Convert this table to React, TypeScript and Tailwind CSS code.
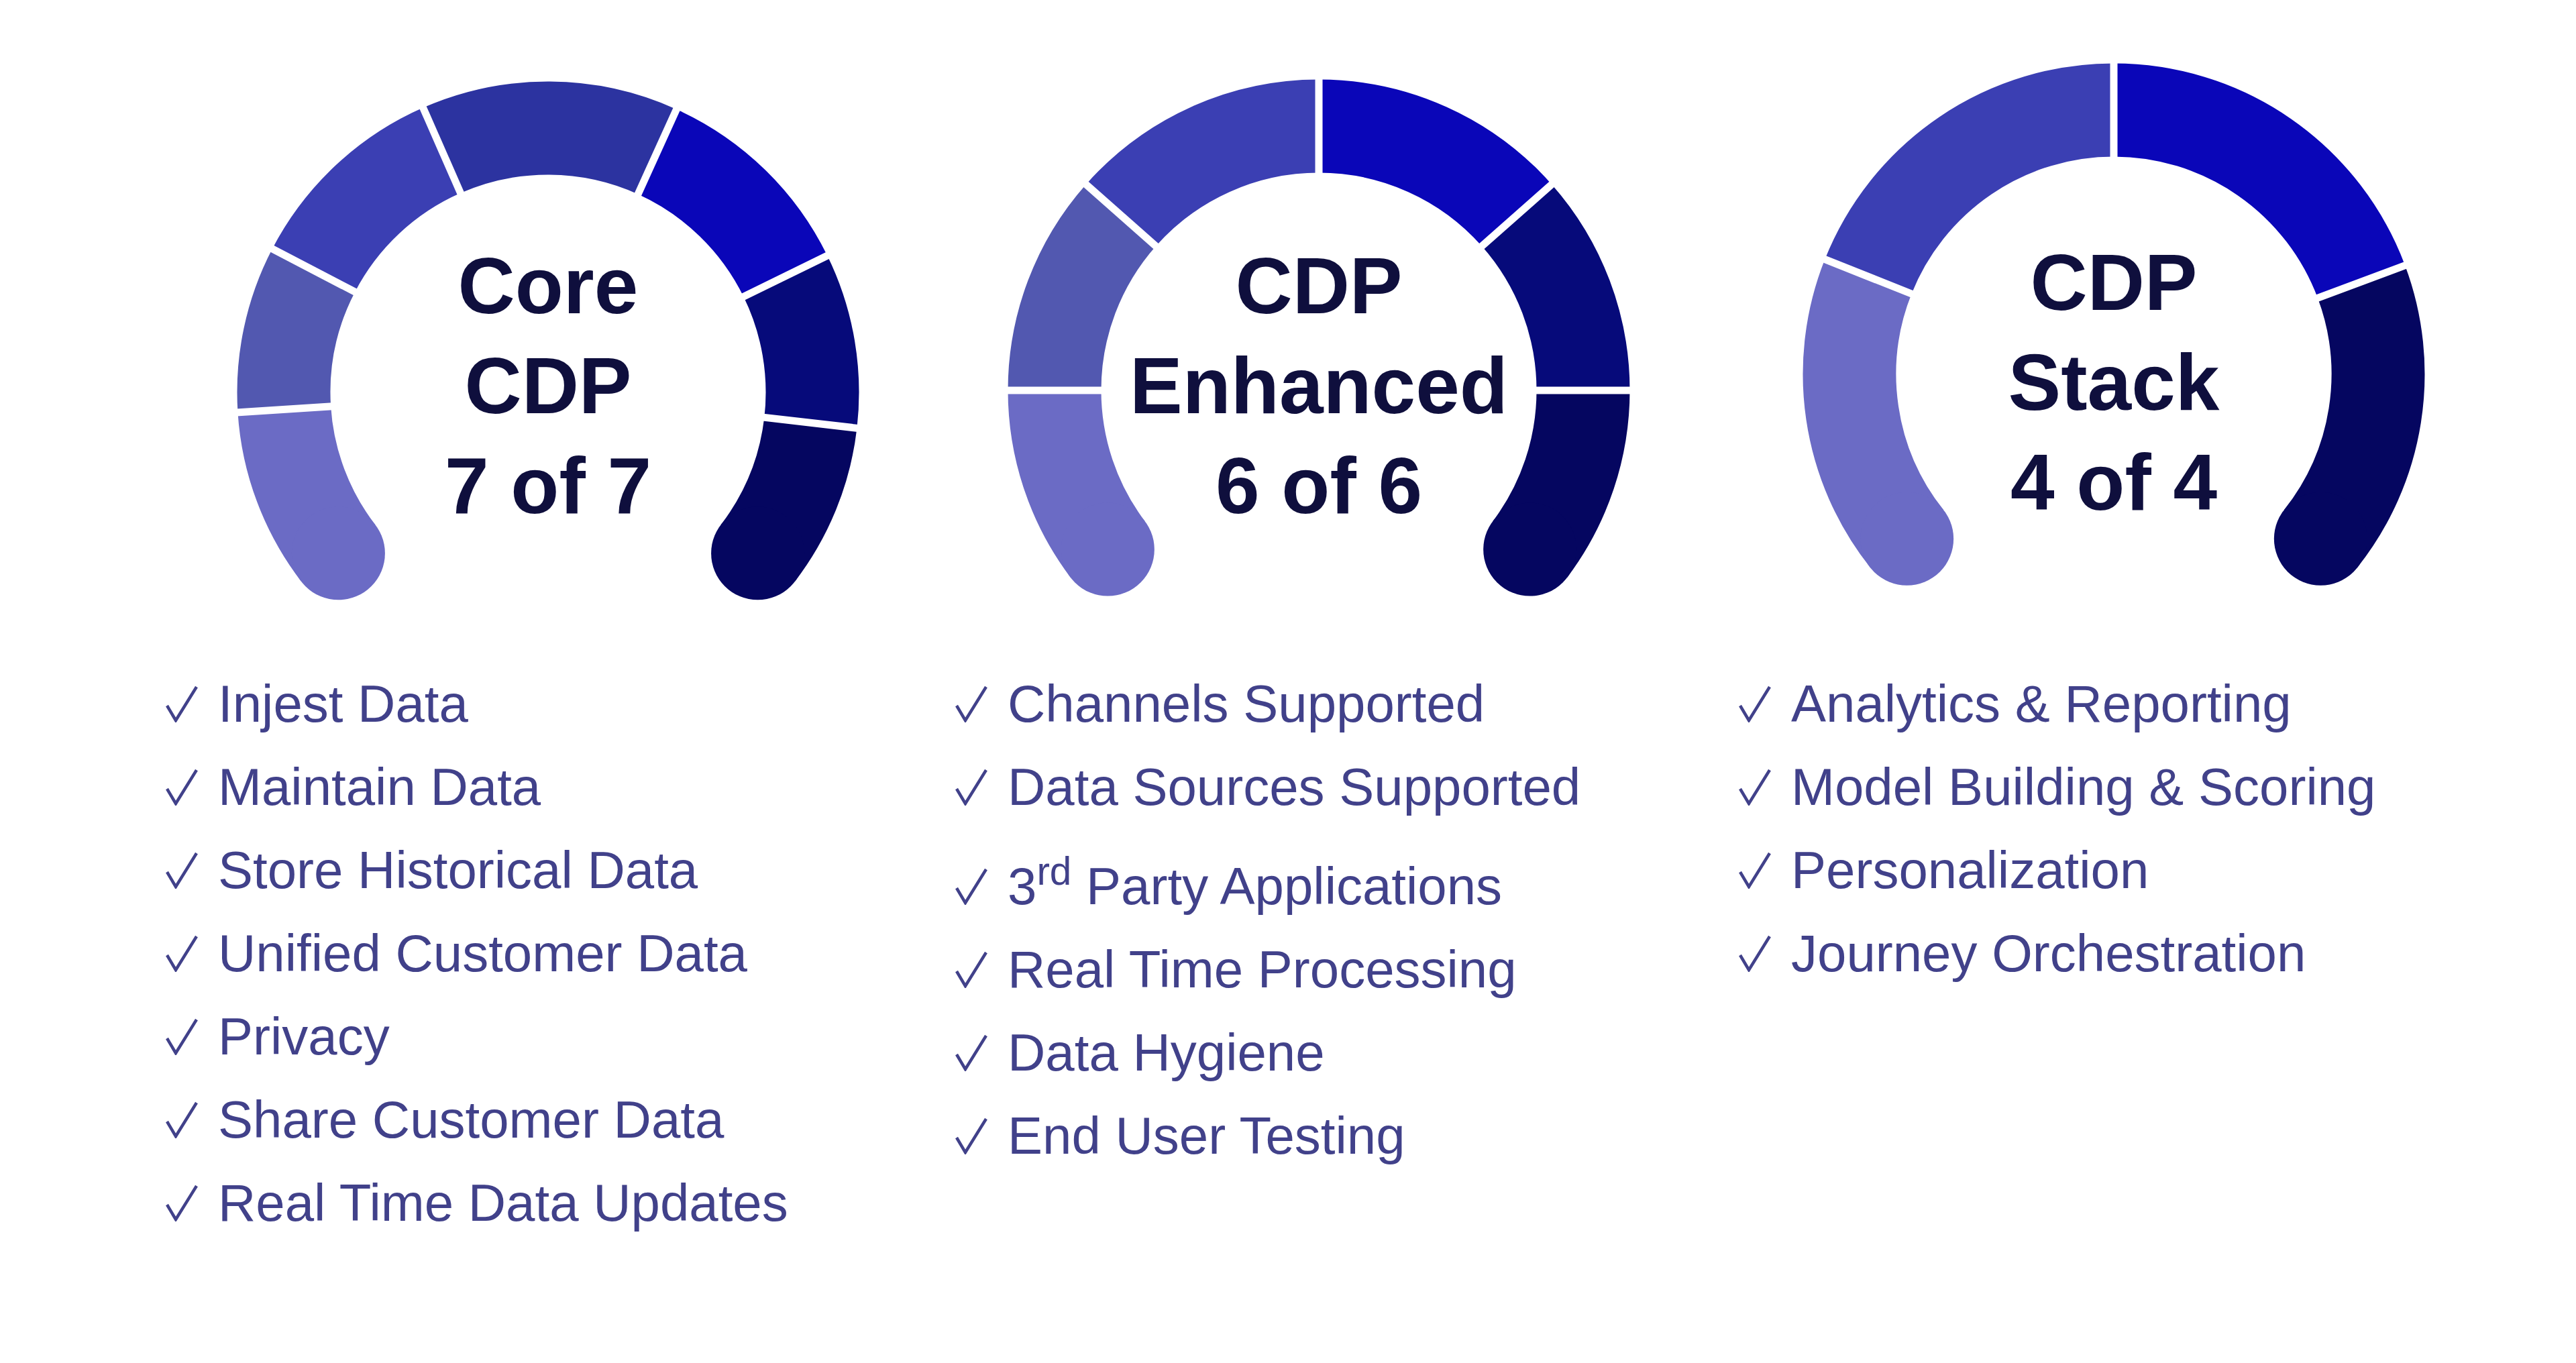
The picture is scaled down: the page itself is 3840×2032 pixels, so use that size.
import React from 'react'

const CX = 500
const R = 394
const W = 139

type GaugeProps = {
  cy: number
  stops: number[]
  colors: string[]
}

const pt = (cy: number, r: number, a: number) => {
  const t = (a * Math.PI) / 180
  return [CX + r * Math.sin(t), cy - r * Math.cos(t)]
}

const arc = (cy: number, a1: number, a2: number) => {
  const [x1, y1] = pt(cy, R, a1)
  const [x2, y2] = pt(cy, R, a2)
  return `M ${x1} ${y1} A ${R} ${R} 0 ${a2 - a1 > 180 ? 1 : 0} 1 ${x2} ${y2}`
}

const GaugeArc = ({ cy, stops, colors }: GaugeProps) => {
  const first = pt(cy, R, stops[0])
  const last = pt(cy, R, stops[stops.length - 1])
  return (
    <svg width="1000" height="987" viewBox="0 0 1000 987" className="[grid-area:1/1]">
      {colors.map((c, i) => (
        <path key={i} d={arc(cy, stops[i], stops[i + 1])} stroke={c} strokeWidth={W} fill="none" />
      ))}
      <circle cx={first[0]} cy={first[1]} r={W / 2} fill={colors[0]} />
      <circle cx={last[0]} cy={last[1]} r={W / 2} fill={colors[colors.length - 1]} />
      {stops.slice(1, -1).map((a, i) => {
        const [x1, y1] = pt(cy, R - W / 2 - 6, a)
        const [x2, y2] = pt(cy, R + W / 2 + 6, a)
        return <line key={i} x1={x1} y1={y1} x2={x2} y2={y2} stroke="#ffffff" strokeWidth="11" />
      })}
    </svg>
  )
}

const Check = () => (
  <svg width="48" height="56" viewBox="0 0 48 56" className="relative -top-[6px] inline-block mr-[30px]">
    <polyline points="2,31 15,53 46,3" fill="none" stroke="#41418a" strokeWidth="4.5" strokeLinejoin="miter" />
  </svg>
)

const columns = [
  {
    width: 'w-[1177px]',
    ml: 'ml-[70px]',
    textTop: 'pt-[352px]',
    cy: 585,
    stops: [-127.5, -93.7, -62.5, -23.7, 24.4, 63.9, 96.6, 127.5],
    colors: ['#6b6bc5', '#5258b0', '#3b3fb3', '#2c33a0', '#0a06b8', '#060a7a', '#050660'],
    title: ['Core', 'CDP', '7 of 7'],
    items: [
      'Injest Data',
      'Maintain Data',
      'Store Historical Data',
      'Unified Customer Data',
      'Privacy',
      'Share Customer Data',
      'Real Time Data Updates',
    ],
  },
  {
    width: 'w-[1168px]',
    ml: 'ml-[42px]',
    textTop: 'pt-[352px]',
    cy: 582,
    stops: [-127, -90, -48.5, 0, 48.5, 90, 127],
    colors: ['#6b6bc5', '#5258b0', '#3b3fb3', '#0a06b8', '#060a7a', '#050660'],
    title: ['CDP', 'Enhanced', '6 of 6'],
    items: [
      'Channels Supported',
      'Data Sources Supported',
      '3rd',
      'Real Time Processing',
      'Data Hygiene',
      'End User Testing',
    ],
  },
  {
    width: 'w-[1180px]',
    ml: 'ml-[59px]',
    textTop: 'pt-[347px]',
    cy: 558,
    stops: [-128.5, -68.3, 0, 69.5, 128.5],
    colors: ['#6b6bc5', '#3b3fb3', '#0a06b8', '#050660'],
    title: ['CDP', 'Stack', '4 of 4'],
    items: ['Analytics & Reporting', 'Model Building & Scoring', 'Personalization', 'Journey Orchestration'],
  },
]

export default function App() {
  return (
    <div className="min-h-screen bg-white font-['Liberation_Sans',Arial,sans-serif]">
      <div className="flex pl-[247px]">
        {columns.map((col) => (
          <div key={col.title.join()} className={`${col.width} shrink-0`}>
            {/* gauge with its label */}
            <div className={`grid w-[1000px] ${col.ml}`}>
              <GaugeArc cy={col.cy} stops={col.stops} colors={col.colors} />
              <div
                className={`[grid-area:1/1] flex flex-col items-center ${col.textTop} text-[118px] leading-[149px] font-bold text-[#0f0f3d]`}
              >
                {col.title.map((t) => (
                  <span key={t}>{t}</span>
                ))}
              </div>
            </div>

            {/* feature list */}
            <ul className="text-[78px] leading-[124px] text-[#41418a]">
              {col.items.map((item) =>
                item === '3rd' ? (
                  <li key={item} className="mt-[24px] whitespace-nowrap">
                    <Check />
                    3<sup>rd</sup> Party Applications
                  </li>
                ) : (
                  <li key={item} className="whitespace-nowrap">
                    <Check />
                    {item}
                  </li>
                )
              )}
            </ul>
          </div>
        ))}
      </div>
    </div>
  )
}
